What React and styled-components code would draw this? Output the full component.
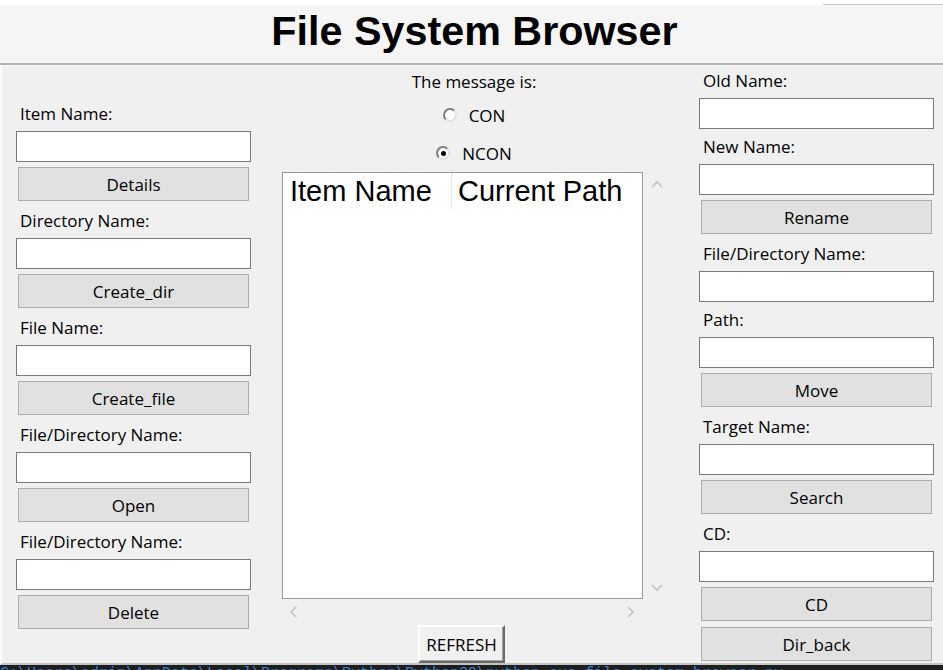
import React from "react";
import styled, { createGlobalStyle } from "styled-components";

const Global = createGlobalStyle`
  html, body { margin: 0; padding: 0; background: #ffffff; }
  body { font-family: "Open Sans", "Noto Sans", sans-serif; }
  * { box-sizing: border-box; }
`;

const Page = styled.div`
  width: 943px;
  height: 670px;
  display: flex;
  flex-direction: column;
  overflow: hidden;
`;

const TopStrip = styled.div`
  height: 5px;
  background: #ffffff;
  display: flex;
  justify-content: flex-end;
  align-items: flex-end;
`;

const TopLine = styled.div`
  width: 120px;
  height: 1px;
  background: #c9c9c9;
`;

const Header = styled.header`
  height: 60px;
  background: #f5f5f5;
  border-bottom: 2px solid #b4b4b4;
  display: flex;
  justify-content: center;
  align-items: center;
  padding: 0 0 5px 6px;
`;

const Title = styled.h1`
  margin: 0;
  font-family: "Liberation Sans", Arial, sans-serif;
  font-weight: 700;
  font-size: 41.3px;
  color: #000;
`;

const Main = styled.main`
  height: 600px;
  background: #f0f0f0;
  border-top: 1px solid #fbfbfb;
  border-left: 2px solid #fbfbfb;
  border-bottom: 2px solid #c4c4c4;
  display: grid;
  grid-template-columns: 235px 415px 277px;
  padding-left: 14px;
`;

const Column = styled.div`
  display: flex;
  flex-direction: column;
  margin-top: ${(p) => p.$mt}px;
  margin-left: ${(p) => p.$ml || 0}px;
`;

const Label = styled.div`
  font-size: 17px;
  line-height: 22px;
  height: 22px;
  color: #000;
  padding-left: 4px;
  margin-top: 9px;
  margin-bottom: 6px;
  white-space: nowrap;
`;

const Entry = styled.input`
  height: 31px;
  width: 235px;
  border: 1px solid #7a7a7a;
  background: #fff;
  outline: none;
  padding: 0 4px;
  font-family: inherit;
  font-size: 17px;
  & + ${Label} {
    margin-top: 7px;
  }
`;

const Button = styled.button`
  height: 34px;
  width: 231px;
  margin: 5px 0 0 2px;
  background: #e1e1e1;
  border: 1px solid #adadad;
  font-family: inherit;
  font-size: 17px;
  color: #000;
  padding: 0;
  & + & {
    margin-top: 6px;
  }
`;

const Middle = styled.div`
  display: flex;
  flex-direction: column;
  align-items: center;
  margin-left: 31px;
`;

const Caption = styled.div`
  margin-top: 5px;
  font-size: 17px;
  line-height: 22px;
  color: #000;
`;

const RadioGroup = styled.div`
  margin-top: 3px;
  display: flex;
  flex-direction: column;
  align-items: center;
`;

const RadioRow = styled.label`
  height: 38px;
  display: flex;
  align-items: center;
  gap: 12px;
  font-size: 17px;
  color: #000;
`;

const RadioDot = styled.span`
  width: 14px;
  height: 14px;
  border-radius: 50%;
  border: 2px solid;
  border-color: #7d7d7d #e2e2e2 #e2e2e2 #7d7d7d;
  background: #fff;
  display: flex;
  align-items: center;
  justify-content: center;
  &::after {
    content: "";
    width: 5px;
    height: 5px;
    border-radius: 50%;
    background: ${(p) => (p.$on ? "#000" : "transparent")};
  }
`;

const TreeRow = styled.div`
  display: flex;
  align-self: stretch;
  height: 427px;
`;

const Tree = styled.div`
  width: 361px;
  height: 100%;
  background: #fff;
  border: 1px solid #9a9a9a;
  display: flex;
  flex-direction: column;
`;

const TreeHead = styled.div`
  display: grid;
  grid-template-columns: 169px 1fr;
  height: 36px;
`;

const HeadCell = styled.div`
  font-family: "Liberation Sans", Arial, sans-serif;
  font-size: 29px;
  line-height: 36px;
  color: #000;
  padding-left: ${(p) => p.$pl}px;
  border-right: ${(p) => (p.$sep ? "1px solid #e5e5e5" : "none")};
  white-space: nowrap;
  overflow: hidden;
`;

const VScroll = styled.div`
  width: 23px;
  display: flex;
  flex-direction: column;
  justify-content: space-between;
  align-items: center;
  padding: 7px 0 6px 4px;
`;

const HScroll = styled.div`
  align-self: stretch;
  height: 26px;
  display: flex;
  justify-content: space-between;
  align-items: center;
  padding: 0 30px 0 6px;
`;

const Refresh = styled.button`
  height: 38px;
  width: 87px;
  margin-right: 25px;
  background: #f0f0f0;
  border: 2px solid;
  border-color: #ffffff #6b6b6b #6b6b6b #ffffff;
  box-shadow: inset -1px -1px 0 #a0a0a0;
  font-family: inherit;
  font-size: 17px;
  color: #000;
  padding: 0;
`;

const Footer = styled.div`
  height: 5px;
  background: #1e1e1e;
  overflow: hidden;
  font-family: "Liberation Mono", monospace;
  font-size: 15px;
  line-height: 15px;
  color: #3b7fd0;
  white-space: nowrap;
  padding-top: 1px;
`;

const Chevron = ({ dir }) => {
  const pts = {
    up: "2,8 7,3 12,8",
    down: "2,3 7,8 12,3",
    left: "8,2 3,7 8,12",
    right: "3,2 8,7 3,12",
  }[dir];
  const vertical = dir === "up" || dir === "down";
  return (
    <svg width={vertical ? 14 : 11} height={vertical ? 11 : 14} viewBox={vertical ? "0 0 14 11" : "0 0 11 14"}>
      <polyline points={pts} fill="none" stroke="#c2c2c2" strokeWidth="1.6" />
    </svg>
  );
};

const Field = ({ label }) => (
  <>
    <Label>{label}</Label>
    <Entry type="text" />
  </>
);

export default function App() {
  return (
    <Page>
      <Global />
      <TopStrip>
        <TopLine />
      </TopStrip>
      <Header>
        <Title>File System Browser</Title>
      </Header>
      <Main>
        <Column $mt={28}>
          <Field label="Item Name:" />
          <Button>Details</Button>
          <Field label="Directory Name:" />
          <Button>Create_dir</Button>
          <Field label="File Name:" />
          <Button>Create_file</Button>
          <Field label="File/Directory Name:" />
          <Button>Open</Button>
          <Field label="File/Directory Name:" />
          <Button>Delete</Button>
        </Column>
        <Middle>
          <Caption>The message is:</Caption>
          <RadioGroup>
            <RadioRow>
              <RadioDot />
              CON
            </RadioRow>
            <RadioRow>
              <RadioDot $on />
              NCON
            </RadioRow>
          </RadioGroup>
          <TreeRow>
            <Tree>
              <TreeHead>
                <HeadCell $pl={7} $sep>Item Name</HeadCell>
                <HeadCell $pl={6}>Current Path</HeadCell>
              </TreeHead>
            </Tree>
            <VScroll>
              <Chevron dir="up" />
              <Chevron dir="down" />
            </VScroll>
          </TreeRow>
          <HScroll>
            <Chevron dir="left" />
            <Chevron dir="right" />
          </HScroll>
          <Refresh>REFRESH</Refresh>
        </Middle>
        <Column $mt={-5} $ml={33}>
          <Field label="Old Name:" />
          <Field label="New Name:" />
          <Button>Rename</Button>
          <Field label="File/Directory Name:" />
          <Field label="Path:" />
          <Button>Move</Button>
          <Field label="Target Name:" />
          <Button>Search</Button>
          <Field label="CD:" />
          <Button>CD</Button>
          <Button>Dir_back</Button>
        </Column>
      </Main>
      <Footer>C:\Users\admin\AppData\Local\Programs\Python\Python39\python.exe file_system_browser.py</Footer>
    </Page>
  );
}
